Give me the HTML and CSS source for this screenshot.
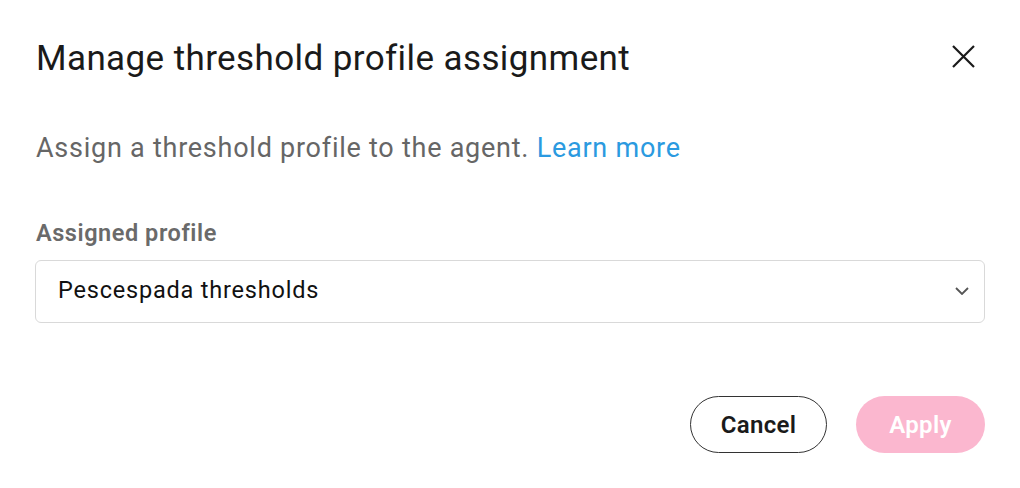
FILE: index.html
```html
<!DOCTYPE html>
<html>
<head>
<meta charset="utf-8">
<link rel="stylesheet" href="styles.css">
</head>
<body>
<div class="dialog">
  <div class="header">
    <h1 class="title">Manage threshold profile assignment</h1>
    <button class="close" aria-label="Close">
      <svg width="23" height="23" viewBox="0 0 23 23"><path d="M1 1L22 22M22 1L1 22" stroke="#1a1a1a" stroke-width="2.2" fill="none"/></svg>
    </button>
  </div>
  <p class="desc">Assign a threshold profile to the agent. <a class="link" href="#">Learn more</a></p>
  <div class="field">
    <label class="label">Assigned profile</label>
    <div class="select">
      <span class="select-text">Pescespada thresholds</span>
      <svg class="chev" width="14" height="8" viewBox="0 0 14 8"><path d="M1 1L7 7L13 1" stroke="#555" stroke-width="1.8" fill="none"/></svg>
    </div>
  </div>
  <div class="actions">
    <button class="btn btn-cancel">Cancel</button>
    <button class="btn btn-apply">Apply</button>
  </div>
</div>
</body>
</html>
```
FILE: styles.css
```css
html, body { margin: 0; padding: 0; background: #fff; }
body { font-family: Roboto, "Liberation Sans", sans-serif; color: #1a1a1a; }
.dialog { padding: 39px 35px 0 35px; width: 950px; }
.header { display: flex; justify-content: space-between; align-items: flex-start; height: 40px; }
.title { margin: 0 0 0 1px; font-size: 35px; line-height: 40px; font-weight: 400; color: #1a1a1a; letter-spacing: 0.4px; }
.close { background: none; border: 0; padding: 0; margin: 6px 10px 0 0; width: 23px; height: 23px; display: flex; cursor: pointer; }
.desc { margin: 54px 0 0 1px; font-size: 27px; line-height: 30px; color: #666; letter-spacing: 0.75px; }
.link { color: #2b9ae0; text-decoration: none; }
.field { margin-top: 57px; }
.label { display: block; margin-left: 1px; font-size: 23.5px; line-height: 26px; font-weight: 600; color: #6a6a6a; letter-spacing: 0.55px; }
.select { margin-top: 14px; height: 61px; box-sizing: content-box; border: 1px solid #d9d9d9; border-radius: 6px; display: flex; align-items: center; justify-content: space-between; padding: 0 15px 0 22px; }
.select-text { font-size: 23.5px; line-height: 26px; padding-bottom: 4px; color: #111; letter-spacing: 0.8px; }
.chev { margin-top: -2px; }
.actions { display: flex; justify-content: flex-end; gap: 29px; margin-top: 73px; }
.btn { height: 57px; border-radius: 29px; font-family: Roboto, "Liberation Sans", sans-serif; font-size: 24px; font-weight: 600; padding: 0; letter-spacing: 0.3px; }
.btn-cancel { width: 137px; background: #fff; border: 1px solid #333; color: #1a1a1a; }
.btn-apply { width: 129px; background: #fbb7cf; border: 0; color: #fff; }
```
